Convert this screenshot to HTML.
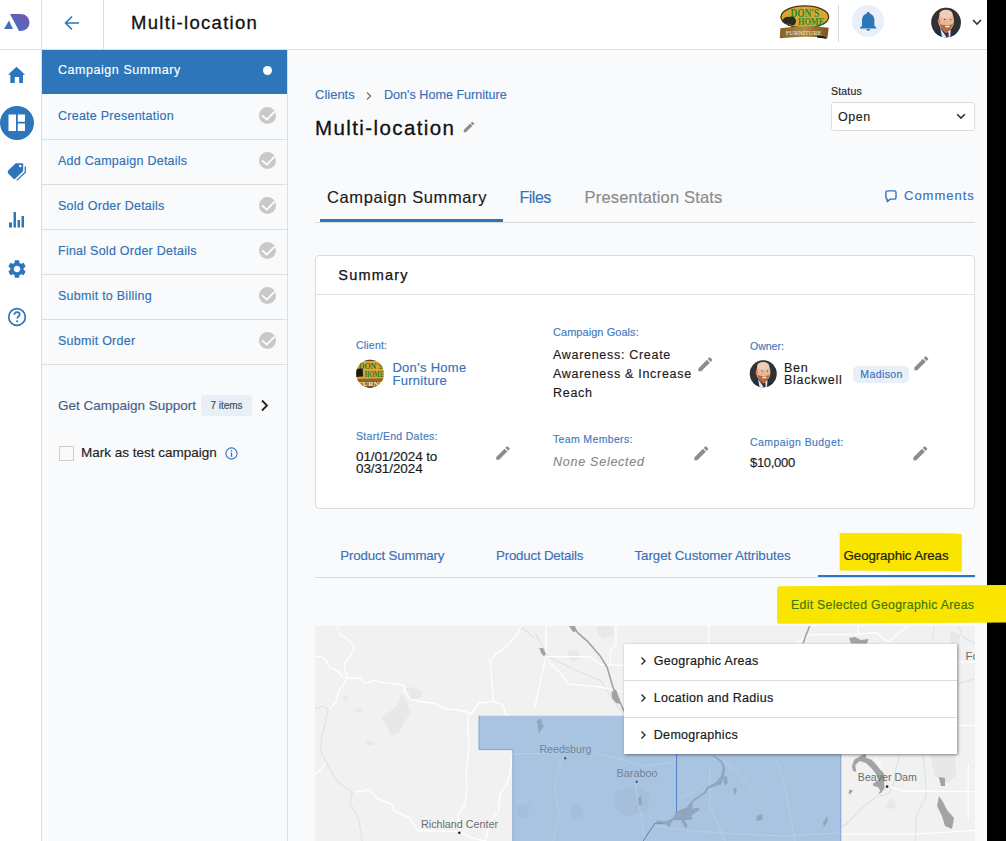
<!DOCTYPE html>
<html><head><meta charset="utf-8">
<style>
*{box-sizing:border-box;margin:0;padding:0}
html,body{width:1006px;height:841px;overflow:hidden;background:#000}
body{font-family:"Liberation Sans",sans-serif;position:relative;color:#1a1a1a;-webkit-text-stroke:0.15px currentColor}
.a{position:absolute;white-space:nowrap}
svg{-webkit-text-stroke:0}
#page{position:absolute;left:0;top:0;width:987px;height:841px;background:#f9fafc;overflow:hidden}
#hdr{position:absolute;left:0;top:0;width:987px;height:50px;background:#fff;border-bottom:1px solid #dedede}
#rail{position:absolute;left:0;top:50px;width:42px;height:791px;background:#fff;border-right:1px solid #dedede}
#side{position:absolute;left:42px;top:50px;width:246px;height:791px;background:#f9fafc;border-right:1px solid #dedede}
.row{position:absolute;left:0;width:245px;height:45px;border-bottom:1px solid #dedede}
.row .t{position:absolute;left:16px;top:13.3px;font-size:12.5px;color:#2f70b6;letter-spacing:0.25px;line-height:16px}
.row .ck{position:absolute;left:217px;top:12.4px;width:17px;height:17px;border-radius:50%;background:#c9c9c9}
.row .ck svg{position:absolute;left:0;top:0}
</style></head><body>
<div id="page">
<div id="hdr">
  <svg class="a" style="left:0;top:0" width="42" height="50" viewBox="0 0 42 50">
    <defs><linearGradient id="lg" x1="0" y1="1" x2="1" y2="0"><stop offset="0" stop-color="#3b74c4"/><stop offset="1" stop-color="#7b55b0"/></linearGradient></defs>
    <path d="M4 29 L9 20.5 L13 29 Z" fill="#3f73c2"/>
    <path d="M10 14 L21 14 A8.5 8.5 0 0 1 21 31 L19 31 Z" fill="url(#lg)"/>
  </svg>
  <div class="a" style="left:41px;top:0;width:1px;height:50px;background:#dedede"></div>
  <svg class="a" style="left:64px;top:15px" width="16" height="16" viewBox="0 0 16 16"><path d="M15 8 H2 M8 1.5 L1.5 8 L8 14.5" fill="none" stroke="#2d76ba" stroke-width="1.6"/></svg>
  <div class="a" style="left:103px;top:0;width:1px;height:50px;background:#dedede"></div>
  <div class="a" style="left:131px;top:13.64px;font-size:18.5px;line-height:18.5px;color:#111;letter-spacing:1.3px;-webkit-text-stroke:0.3px #111">Multi-location</div>

  <svg class="a" style="left:775px;top:2px" width="60" height="40" viewBox="0 0 1006 671">
    <defs><linearGradient id="rib" x1="0" y1="0" x2="1" y2="0"><stop offset="0" stop-color="#8a5e22"/><stop offset="0.5" stop-color="#b08a48"/><stop offset="1" stop-color="#7a5220"/></linearGradient></defs>
    <ellipse cx="500" cy="250" rx="400" ry="185" fill="#d9a633" stroke="#4a3510" stroke-width="22"/>
    <path d="M130 300 Q170 230 240 250 Q300 220 340 280 Q370 320 330 380 Q280 400 240 370 L230 400 L215 400 L220 360 Q160 380 130 330 Z" fill="#2b2a1c"/>
    <text x="500" y="245" font-family="Liberation Serif" font-size="210" font-weight="bold" fill="#1e8a2e" text-anchor="middle" textLength="480" lengthAdjust="spacingAndGlyphs">DON'S</text>
    <text x="605" y="390" font-family="Liberation Serif" font-size="165" font-weight="bold" fill="#1e8a2e" text-anchor="middle" textLength="440" lengthAdjust="spacingAndGlyphs">HOME</text>
    <path d="M90 440 Q500 380 900 430 L880 600 Q500 560 80 610 Z" fill="url(#rib)"/>
    <path d="M700 570 Q800 560 870 600 L860 620 Q780 600 710 600 Z" fill="#1e1a12"/>
    <text x="480" y="550" font-family="Liberation Serif" font-size="120" fill="#f2ead8" text-anchor="middle" textLength="600" lengthAdjust="spacingAndGlyphs">FURNITURE</text>
  </svg>
  <div class="a" style="left:838px;top:5px;width:1px;height:37px;background:#d8d8d8"></div>
  <div class="a" style="left:852px;top:5px;width:32px;height:32px;border-radius:50%;background:#e9f0f8"></div>
  <svg class="a" style="left:858px;top:10px" width="20" height="22" viewBox="0 0 20 22"><path d="M10.2 2.0 C11.1 2.0 11.6 2.6 11.7 3.4 C14.5 4.2 16.4 6.6 16.4 10 V16 L18.3 17.6 V18.4 H2.1 V17.6 L4 16 V10 C4 6.6 5.9 4.2 8.7 3.4 C8.8 2.6 9.3 2.0 10.2 2.0 Z M8.4 19 H12 C12 20 11.2 20.8 10.2 20.8 C9.2 20.8 8.4 20 8.4 19 Z" fill="#2d76ba"/></svg>
  <svg class="a" style="left:926.00px;top:3.00px" width="40.00" height="40.00" viewBox="0 0 841 841">
<defs><clipPath id="cph"><circle cx="422" cy="410" r="312"/></clipPath></defs>
<circle cx="422" cy="410" r="314" fill="#c9d6ea"/>
<g clip-path="url(#cph)">
<rect x="0" y="0" width="841" height="841" fill="#323232"/>
<path d="M150 640 Q250 520 330 500 L520 520 Q620 560 680 680 L700 841 L140 841 Z" fill="#1f2f47"/>
<path d="M300 530 L420 700 L470 841 L360 841 Z" fill="#dcecef"/>
<path d="M440 600 L520 560 L500 841 L450 841 Z" fill="#dcecef"/>
<path d="M430 620 L470 610 L480 760 L440 760 Z" fill="#5a2020"/>
<ellipse cx="425" cy="370" rx="165" ry="225" fill="#e7b89c"/>
<ellipse cx="270" cy="380" rx="25" ry="50" fill="#d9746a"/>
<ellipse cx="420" cy="230" rx="140" ry="90" fill="#f0cdb8"/>
<path d="M290 430 Q300 560 420 640 Q540 560 570 430 Q520 470 420 460 Q330 470 290 430 Z" fill="#b8693f"/>
<ellipse cx="450" cy="495" rx="55" ry="22" fill="#efe3cf"/>
<circle cx="395" cy="345" r="14" fill="#4a3a34"/><circle cx="520" cy="350" r="14" fill="#5a4a44"/>
</g></svg>
  <svg class="a" style="left:972px;top:19px" width="10" height="7" viewBox="0 0 10 7"><path d="M1 1 L5 5 L9 1" fill="none" stroke="#333" stroke-width="1.6"/></svg>
</div>
<div id="rail">
  <svg class="a" style="left:8px;top:16px" width="18" height="18" viewBox="0 0 18 18"><path d="M8.5 0.8 L17.1 8.65 H15 V17 H11.15 V11 H6.8 V17 H2.3 V8.65 H0 Z" fill="#2d76ba"/></svg>
  <div class="a" style="left:0px;top:56px;width:34px;height:34px;border-radius:50%;background:#2d76ba"></div>
  <svg class="a" style="left:8px;top:64px" width="18" height="18" viewBox="0 0 18 18"><path d="M0.5 0.5 H8 V17 H0.5 Z M9.8 0.5 H17 V7.8 H9.8 Z M9.8 9.6 H17 V17 H9.8 Z" fill="#fff"/></svg>
  <svg class="a" style="left:6px;top:112px" width="22" height="20" viewBox="0 0 22 20"><path d="M2.2 8.6 L9.4 1.4 Q9.6 1.2 10 1.2 H16.2 Q17.2 1.2 17.2 2.2 V8.6 Q17.2 9.2 16.8 9.6 L9.2 16.8 Q8.2 17.6 7.4 16.8 L2.2 11.4 Q1.2 10 2.2 8.6 Z" fill="#2d76ba"/><circle cx="14.3" cy="4" r="1.3" fill="#fff"/><path d="M19.3 4.6 V10.2 L10.7 18.4" fill="none" stroke="#2d76ba" stroke-width="1.3" stroke-linejoin="round"/></svg>
  <svg class="a" style="left:8px;top:160px" width="18" height="18" viewBox="0 0 18 18"><path d="M1 12.5 H4 V17.5 H1 Z M5.5 2 H8 V17.5 H5.5 Z M9.5 10 H12 V17.5 H9.5 Z M13.5 6 H16 V17.5 H13.5 Z" fill="#2d76ba"/></svg>
  <svg class="a" style="left:5.5px;top:207.5px" width="22" height="22" viewBox="0 0 24 24"><path fill="#2d76ba" d="M19.14 12.94c.04-.3.06-.61.06-.94 0-.32-.02-.64-.07-.94l2.03-1.58a.49.49 0 0 0 .12-.61l-1.92-3.32a.488.488 0 0 0-.59-.22l-2.39.96c-.5-.38-1.030-.7-1.62-.94l-.36-2.540a.484.484 0 0 0-.48-.41h-3.84c-.24 0-.43.17-.47.41l-.36 2.54c-.59.24-1.13.57-1.62.94l-2.39-.96c-.22-.08-.47 0-.59.22L2.74 8.87c-.12.21-.08.47.12.61l2.03 1.58c-.05.3-.09.63-.09.94s.02.64.07.94l-2.03 1.58a.49.49 0 0 0-.12.61l1.92 3.32c.12.22.37.29.59.22l2.39-.96c.5.38 1.03.7 1.62.94l.36 2.54c.05.24.24.41.48.41h3.84c.24 0 .44-.17.47-.41l.36-2.54c.59-.24 1.13-.56 1.62-.94l2.39.96c.22.08.47 0 .59-.22l1.92-3.32c.12-.22.07-.47-.12-.61l-2.01-1.58zM12 15.6c-1.98 0-3.6-1.62-3.6-3.6s1.62-3.6 3.6-3.6 3.6 1.62 3.6 3.6-1.62 3.6-3.6 3.6z"/></svg>
  <svg class="a" style="left:7px;top:257px" width="20" height="20" viewBox="0 0 20 20"><circle cx="10" cy="10" r="8.3" fill="none" stroke="#2d76ba" stroke-width="1.7"/><path d="M7.3 7.8 C7.3 6.2 8.5 5.2 10 5.2 C11.6 5.2 12.7 6.2 12.7 7.6 C12.7 9.4 10.2 9.6 10.2 11.6" fill="none" stroke="#2d76ba" stroke-width="1.7"/><circle cx="10.2" cy="14.3" r="1.1" fill="#2d76ba"/></svg>
</div>
<div id="side">
<div class="row" style="top:0;height:44px;background:#2d76ba;border-bottom:none"><div class="t" style="color:#fff;top:12px;letter-spacing:0.55px">Campaign Summary</div><div class="a" style="left:221px;top:16px;width:9px;height:9px;border-radius:50%;background:#fff"></div></div>
<div class="row" style="top:45px"><div class="t">Create Presentation</div><div class="ck"><svg width="17" height="17" viewBox="0 0 17 17"><path d="M3 8.4 L7.8 12.6 L15.6 4.6" fill="none" stroke="#fff" stroke-width="1.8"/></svg></div></div>
<div class="row" style="top:90px"><div class="t">Add Campaign Details</div><div class="ck"><svg width="17" height="17" viewBox="0 0 17 17"><path d="M3 8.4 L7.8 12.6 L15.6 4.6" fill="none" stroke="#fff" stroke-width="1.8"/></svg></div></div>
<div class="row" style="top:135px"><div class="t">Sold Order Details</div><div class="ck"><svg width="17" height="17" viewBox="0 0 17 17"><path d="M3 8.4 L7.8 12.6 L15.6 4.6" fill="none" stroke="#fff" stroke-width="1.8"/></svg></div></div>
<div class="row" style="top:180px"><div class="t">Final Sold Order Details</div><div class="ck"><svg width="17" height="17" viewBox="0 0 17 17"><path d="M3 8.4 L7.8 12.6 L15.6 4.6" fill="none" stroke="#fff" stroke-width="1.8"/></svg></div></div>
<div class="row" style="top:225px"><div class="t">Submit to Billing</div><div class="ck"><svg width="17" height="17" viewBox="0 0 17 17"><path d="M3 8.4 L7.8 12.6 L15.6 4.6" fill="none" stroke="#fff" stroke-width="1.8"/></svg></div></div>
<div class="row" style="top:270px"><div class="t">Submit Order</div><div class="ck"><svg width="17" height="17" viewBox="0 0 17 17"><path d="M3 8.4 L7.8 12.6 L15.6 4.6" fill="none" stroke="#fff" stroke-width="1.8"/></svg></div></div>
  <div class="a" style="left:16px;top:348px;font-size:13.5px;color:#42608a;line-height:16px">Get Campaign Support</div>
  <div class="a" style="left:159px;top:345px;width:51px;height:21px;border-radius:3px;background:#e9eff7;font-size:10px;color:#3d4a5c;text-align:center;line-height:21px">7 items</div>
  <svg class="a" style="left:218px;top:349px" width="10" height="13" viewBox="0 0 10 13"><path d="M2 1.5 L7 6.5 L2 11.5" fill="none" stroke="#222" stroke-width="1.8"/></svg>
  <div class="a" style="left:17px;top:396px;width:15px;height:15px;border:1px solid #cfcfcf;background:#fafafa"></div>
  <div class="a" style="left:39px;top:395.3px;font-size:13.5px;color:#222;line-height:16px">Mark as test campaign</div>
  <svg class="a" style="left:183px;top:397px" width="13" height="13" viewBox="0 0 13 13"><circle cx="6.5" cy="6.5" r="5.6" fill="none" stroke="#2d76ba" stroke-width="1.1"/><path d="M6.5 5.5 V9.8" stroke="#2d76ba" stroke-width="1.3"/><circle cx="6.5" cy="3.7" r="0.8" fill="#2d76ba"/></svg>
</div>
<div class="a" style="left:315px;top:88.20px;font-size:13px;line-height:13px;color:#3a70b8;letter-spacing:0px;">Clients</div>
<svg class="a" style="left:365px;top:91px" width="8" height="10" viewBox="0 0 8 10"><path d="M2 1.5 L5.5 5 L2 8.5" fill="none" stroke="#777" stroke-width="1.4"/></svg>
<div class="a" style="left:384px;top:88.53px;font-size:12.6px;line-height:12.6px;color:#3a70b8;letter-spacing:0px;">Don's Home Furniture</div>
<div class="a" style="left:315px;top:117.85px;font-size:20.5px;line-height:20.5px;color:#111;letter-spacing:1.4px;-webkit-text-stroke:0.3px #111">Multi-location</div>
<svg class="a" style="left:461.95px;top:120.05px" width="14.00" height="14.00" viewBox="0 0 24 24"><path fill="#8c8c8c" d="M3 17.25V21h3.75L17.81 9.94l-3.75-3.75L3 17.25zM20.71 7.04a.996.996 0 0 0 0-1.41l-2.34-2.34a.996.996 0 0 0-1.41 0l-1.83 1.83 3.75 3.75 1.83-1.83z"/></svg>
<div class="a" style="left:831px;top:86.31px;font-size:10.5px;line-height:10.5px;color:#222;letter-spacing:0.2px;">Status</div>
<div class="a" style="left:831px;top:102px;width:144px;height:29px;background:#fff;border:1px solid #dcdcdc;border-radius:3px"></div>
<div class="a" style="left:838px;top:111.42px;font-size:12.5px;line-height:12.5px;color:#222;letter-spacing:0.5px;">Open</div>
<svg class="a" style="left:956px;top:113px" width="10" height="7" viewBox="0 0 10 7"><path d="M1.2 1.2 L5 5 L8.8 1.2" fill="none" stroke="#333" stroke-width="1.6"/></svg>
<div class="a" style="left:327px;top:189.13px;font-size:16.5px;line-height:16.5px;color:#1a1a1a;letter-spacing:0.6px;">Campaign Summary</div>
<div class="a" style="left:519.5px;top:189.56px;font-size:16px;line-height:16px;color:#3a70b8;letter-spacing:-0.5px;">Files</div>
<div class="a" style="left:584.6px;top:189.13px;font-size:16.5px;line-height:16.5px;color:#8a8a8a;letter-spacing:0.17px;">Presentation Stats</div>
<div class="a" style="left:315px;top:222px;width:660px;height:1px;background:#d9d9d9"></div>
<div class="a" style="left:320px;top:219px;width:183px;height:3px;background:#2d76ba"></div>
<svg class="a" style="left:883px;top:189px" width="16" height="15" viewBox="0 0 16 15"><path d="M4.5 1.9 H11.5 Q13 1.9 13 3.4 V8.6 Q13 10.1 11.5 10.1 H7.3 L4.2 12.6 L4.3 10.1 Q2.9 10.1 2.9 8.6 V3.4 Q2.9 1.9 4.5 1.9 Z" fill="none" stroke="#2d76ba" stroke-width="1.4" stroke-linejoin="round"/></svg>
<div class="a" style="left:904px;top:189.00px;font-size:13px;line-height:13px;color:#3a70b8;letter-spacing:1.0px;">Comments</div>
<div class="a" style="left:315px;top:255px;width:660px;height:254px;background:#fff;border:1px solid #dcdcdc;border-radius:4px"></div>
<div class="a" style="left:316px;top:294px;width:658px;height:1px;background:#e2e2e2"></div>
<div class="a" style="left:338.3px;top:267.63px;font-size:14.5px;line-height:14.5px;color:#111;letter-spacing:1.2px;-webkit-text-stroke:0.25px #111">Summary</div>
<div class="a" style="left:356px;top:340.21px;font-size:10.5px;line-height:10.5px;color:#4279c0;letter-spacing:0.2px;">Client:</div>
<svg class="a" style="left:352px;top:356px" width="36" height="36" viewBox="0 0 841 841">
<defs><clipPath id="cpc"><circle cx="422" cy="414" r="326"/></clipPath></defs>
<g clip-path="url(#cpc)">
<rect width="841" height="841" fill="#dca436"/>
<rect x="0" y="70" width="841" height="40" fill="#2a2418"/>
<text x="440" y="300" font-family="Liberation Serif" font-size="190" font-weight="bold" fill="#1a7a2a" text-anchor="middle" textLength="560" lengthAdjust="spacingAndGlyphs">DON'S</text>
<text x="520" y="490" font-family="Liberation Serif" font-size="190" font-weight="bold" fill="#1a7a2a" text-anchor="middle" textLength="440" lengthAdjust="spacingAndGlyphs">HOME</text>
<path d="M90 300 L250 300 L260 480 L90 490 Z" fill="#1d1a14"/>
<path d="M0 540 L841 520 L841 841 L0 841 Z" fill="#8e6628"/>
<text x="420" y="690" font-family="Liberation Serif" font-size="150" font-weight="bold" fill="#f4ecdc" text-anchor="middle" textLength="540" lengthAdjust="spacingAndGlyphs">FURNI</text>
<rect x="0" y="720" width="841" height="121" fill="#2a2418"/>
</g></svg>
<div class="a" style="left:392.4px;top:361.00px;font-size:13px;line-height:13px;color:#3a70b8;letter-spacing:0.3px;">Don's Home</div>
<div class="a" style="left:392.4px;top:373.60px;font-size:13px;line-height:13px;color:#3a70b8;letter-spacing:0.3px;">Furniture</div>
<div class="a" style="left:356px;top:431.11px;font-size:10.5px;line-height:10.5px;color:#4279c0;letter-spacing:0.3px;">Start/End Dates:</div>
<div class="a" style="left:356px;top:449.57px;font-size:13.5px;line-height:13.5px;color:#1a1a1a;letter-spacing:-0.1px;">01/01/2024 to</div>
<div class="a" style="left:356px;top:461.67px;font-size:13.5px;line-height:13.5px;color:#1a1a1a;letter-spacing:-0.1px;">03/31/2024</div>
<svg class="a" style="left:494.45px;top:444.05px" width="18.00" height="18.00" viewBox="0 0 24 24"><path fill="#8c8c8c" d="M3 17.25V21h3.75L17.81 9.94l-3.75-3.75L3 17.25zM20.71 7.04a.996.996 0 0 0 0-1.41l-2.34-2.34a.996.996 0 0 0-1.41 0l-1.83 1.83 3.75 3.75 1.83-1.83z"/></svg>
<div class="a" style="left:553px;top:326.89px;font-size:11px;line-height:11px;color:#4279c0;letter-spacing:0.05px;">Campaign Goals:</div>
<div class="a" style="left:553px;top:349.12px;font-size:12.5px;line-height:12.5px;color:#1a1a1a;letter-spacing:0.7px;">Awareness: Create</div>
<div class="a" style="left:553px;top:367.72px;font-size:12.5px;line-height:12.5px;color:#1a1a1a;letter-spacing:0.7px;">Awareness &amp; Increase</div>
<div class="a" style="left:553px;top:386.82px;font-size:12.5px;line-height:12.5px;color:#1a1a1a;letter-spacing:0.7px;">Reach</div>
<svg class="a" style="left:695.67px;top:354.67px" width="18.67" height="18.67" viewBox="0 0 24 24"><path fill="#8c8c8c" d="M3 17.25V21h3.75L17.81 9.94l-3.75-3.75L3 17.25zM20.71 7.04a.996.996 0 0 0 0-1.41l-2.34-2.34a.996.996 0 0 0-1.41 0l-1.83 1.83 3.75 3.75 1.83-1.83z"/></svg>
<div class="a" style="left:553px;top:434.41px;font-size:10.5px;line-height:10.5px;color:#4279c0;letter-spacing:0.35px;">Team Members:</div>
<div class="a" style="left:553px;top:455.92px;font-size:12.5px;line-height:12.5px;color:#888;letter-spacing:0.75px;font-style:italic">None Selected</div>
<svg class="a" style="left:691.67px;top:443.67px" width="18.67" height="18.67" viewBox="0 0 24 24"><path fill="#8c8c8c" d="M3 17.25V21h3.75L17.81 9.94l-3.75-3.75L3 17.25zM20.71 7.04a.996.996 0 0 0 0-1.41l-2.34-2.34a.996.996 0 0 0-1.41 0l-1.83 1.83 3.75 3.75 1.83-1.83z"/></svg>
<div class="a" style="left:750px;top:341.41px;font-size:10.5px;line-height:10.5px;color:#4279c0;letter-spacing:0px;">Owner:</div>
<svg class="a" style="left:745.25px;top:356.30px" width="36.36" height="36.36" viewBox="0 0 841 841">
<defs><clipPath id="cpo"><circle cx="422" cy="410" r="312"/></clipPath></defs>
<circle cx="422" cy="410" r="314" fill="#c9d6ea"/>
<g clip-path="url(#cpo)">
<rect x="0" y="0" width="841" height="841" fill="#323232"/>
<path d="M150 640 Q250 520 330 500 L520 520 Q620 560 680 680 L700 841 L140 841 Z" fill="#1f2f47"/>
<path d="M300 530 L420 700 L470 841 L360 841 Z" fill="#dcecef"/>
<path d="M440 600 L520 560 L500 841 L450 841 Z" fill="#dcecef"/>
<path d="M430 620 L470 610 L480 760 L440 760 Z" fill="#5a2020"/>
<ellipse cx="425" cy="370" rx="165" ry="225" fill="#e7b89c"/>
<ellipse cx="270" cy="380" rx="25" ry="50" fill="#d9746a"/>
<ellipse cx="420" cy="230" rx="140" ry="90" fill="#f0cdb8"/>
<path d="M290 430 Q300 560 420 640 Q540 560 570 430 Q520 470 420 460 Q330 470 290 430 Z" fill="#b8693f"/>
<ellipse cx="450" cy="495" rx="55" ry="22" fill="#efe3cf"/>
<circle cx="395" cy="345" r="14" fill="#4a3a34"/><circle cx="520" cy="350" r="14" fill="#5a4a44"/>
</g></svg><div class="a" style="left:784px;top:361.52px;font-size:12.5px;line-height:12.5px;color:#1a1a1a;letter-spacing:0.7px;">Ben</div>
<div class="a" style="left:784px;top:374.12px;font-size:12.5px;line-height:12.5px;color:#1a1a1a;letter-spacing:0.7px;">Blackwell</div>
<div class="a" style="left:853px;top:366px;width:56px;height:17px;background:#e8eff8;border-radius:5px"></div>
<div class="a" style="left:860.3px;top:369.31px;font-size:10.5px;line-height:10.5px;color:#3a70b8;letter-spacing:0.4px;">Madison</div>
<svg class="a" style="left:911.67px;top:354.47px" width="18.67" height="18.67" viewBox="0 0 24 24"><path fill="#8c8c8c" d="M3 17.25V21h3.75L17.81 9.94l-3.75-3.75L3 17.25zM20.71 7.04a.996.996 0 0 0 0-1.41l-2.34-2.34a.996.996 0 0 0-1.41 0l-1.83 1.83 3.75 3.75 1.83-1.83z"/></svg>
<div class="a" style="left:750px;top:437.41px;font-size:10.5px;line-height:10.5px;color:#4279c0;letter-spacing:0.43px;">Campaign Budget:</div>
<div class="a" style="left:750px;top:455.80px;font-size:13px;line-height:13px;color:#1a1a1a;letter-spacing:-0.3px;">$10,000</div>
<svg class="a" style="left:910.67px;top:443.67px" width="18.67" height="18.67" viewBox="0 0 24 24"><path fill="#8c8c8c" d="M3 17.25V21h3.75L17.81 9.94l-3.75-3.75L3 17.25zM20.71 7.04a.996.996 0 0 0 0-1.41l-2.34-2.34a.996.996 0 0 0-1.41 0l-1.83 1.83 3.75 3.75 1.83-1.83z"/></svg>
<svg class="a" style="left:835px;top:530px" width="130" height="45" viewBox="835 530 130 45"><path d="M839.6 533 Q845 532.8 900 533 L950 533.2 Q958 533.6 961.8 534 L961.8 571.8 Q955 571.6 945 571.3 L839.6 570.6 Z" fill="#f9e500"/></svg>
<div class="a" style="left:340.2px;top:549.24px;font-size:13.3px;line-height:13.3px;color:#3a70b8;letter-spacing:-0.15px;">Product Summary</div>
<div class="a" style="left:496px;top:549.24px;font-size:13.3px;line-height:13.3px;color:#3a70b8;letter-spacing:-0.2px;">Product Details</div>
<div class="a" style="left:634.5px;top:549.24px;font-size:13.3px;line-height:13.3px;color:#3a70b8;letter-spacing:-0.05px;">Target Customer Attributes</div>
<div class="a" style="left:843.6px;top:548.94px;font-size:13.3px;line-height:13.3px;color:#1c2208;letter-spacing:-0.1px;-webkit-text-stroke:0.2px #1c2208">Geographic Areas</div>
<div class="a" style="left:315px;top:577px;width:660px;height:1px;background:#d9d9d9"></div>
<div class="a" style="left:818px;top:575px;width:157px;height:2px;background:#2d76ba"></div>
<div class="a" style="left:315px;top:626px;width:660px;height:215px;background:#f0f0f0;overflow:hidden"><svg width="660" height="215" viewBox="0 0 660 215" style="position:absolute;left:0;top:0">
<rect width="660" height="215" fill="#f1f1f1"/>
<g fill="#e8e8e9">
<path d="M90.7 62 L100 61.2 L107 66 L106 72 L96 73 Z"/>
<path d="M86 68 L91 72 L93 80 L96 86 L92 92 L88 98 L84 106 L76 110 L72 100 L66 92 L74 86 L82 80 Z"/>
<path d="M28.4 70 L33.9 69 L32 75.4 L29 75 Z"/>
<path d="M40 83 L48 82 L47 87 L41 86 Z"/>
<path d="M50 115 L60 116 L58 120 L51 119 Z"/>
<path d="M281 0 H298.7 L297 10 L288 13 L283 9 Z"/>
<path d="M252.8 25 L262 24 L266 31 L258 36 L254 32 Z"/>
<path d="M615 127 L640 128 L641 150 L632 157 L620 150 Z"/>
<path d="M576.2 172.1 L580.6 178.7 L579.5 183.0 L571.9 182.0 L570.8 178.7 Z"/>
<path d="M635 5 L645 8 L644 20 L636 18 Z"/>
</g>
<g fill="none" stroke="#d6e6ea" stroke-width="1.2">
<path d="M0 83 L8 79.8 L13.1 83 L10 98 L7 110 L5.5 124.7 L13.1 140 L21.9 155.3 L37.2 166.2 L35 177.2 L43.7 192.5 L47 215"/>
<path d="M220 6.6 L233.1 30.6 L259.4 43.7 L285.6 54.7 L303.1 80.9 L307.5 87.5 L318 100"/>
<path d="M585.0 128.4 L580.6 143.7 L578.4 159.0 L574.0 167.7 L560.9 171.0 L547.8 180.9 L531.4 198.4 L525.9 200.5"/>
<path d="M607.9 128.4 L610.1 145.9 L611.2 169.9 L605.8 180.9 L601.4 189.6 L600.3 215.0"/>
<path d="M619.3 0 L617.1 13.1"/>
<path d="M643.4 0 L647.7 10.9 L660 17.5"/>
<path d="M642.3 58 L660 52.5"/>
<path d="M205.6 1 L220 12"/>
</g>
<g fill="none" stroke="#ffffff" stroke-width="1.3" stroke-linejoin="round">
<path d="M21.9 0 L24 7.7 L32.8 13.1 L39.4 20.8 L36 29.5 L29.5 37.2 L30.6 47 L32.8 51.4"/>
<path d="M0 30.6 L4.4 30 L11 33.9 L14.2 41.5 L19.7 43.7 L24 45.9 L27.3 51.4 L32.8 51.4"/>
<path d="M32.8 52 L45.9 52.5 L49.2 57.3 L59 54.7 L70 56.9 L83.1 58 L89.7 60.1 L89.7 65.6 L96.2 73.9 L111.5 76.5 L120.3 77.6 L129 82.7 L144.3 84.2 L156.4 87.5"/>
<path d="M31.7 52 L28.4 59 L23 65.6 L21.9 75.4 L14.2 83.1"/>
<path d="M156.4 87.5 L153 89.7 L153 105 L154.2 122.5 L150.9 148.7 L152 159.7 L149.8 179.4 L143.2 188.1 L144.3 205.6 L157.4 212.2 L170.6 215"/>
<path d="M156.4 87.5 L164 77 L178.2 75.4 L177.1 56.9 L175 35 L181.5 27.3 L190.2 21.9 L203.4 6.6 L205.6 0"/>
<path d="M178.2 75.4 L188 78.7 L190.2 87.5 L196.8 91.8"/>
<path d="M0 148.7 L10.9 136.7"/>
<path d="M39.4 166.2 L54.7 164 L61.2 171.7 L76.5 178.3 L78.7 184.8 L94 191.4 L102.8 204.5 L144.3 205.6"/>
<path d="M197.9 125.8 L194.6 148.7 L192.4 157.5 L184.8 168.4 L183.7 185.9 L175 194.7 L170.6 215"/>
<path d="M230.9 0 L230.9 30.6 L225.5 54.7 L220 80.9"/>
<path d="M232 30.6 L274.7 30.6 L285.6 38.3 L308.6 39.4"/>
<path d="M233.1 35 L246.2 48.1 L252.8 57.9 L285.6 61.2 L308.6 65.6"/>
<path d="M300.9 0 L300.9 19.7 L295.4 24 L295.4 39.4"/>
<path d="M393.8 0 L393.8 17.5"/>
<path d="M481.5 17.5 L494.7 8.7 L542.8 8.7 L560.3 6.6 L573.4 15.3 L593.1 0"/>
<path d="M542.8 0 L542.8 8.7"/>
<path d="M576.2 161.2 L587.2 165.0 L660 165.6"/>
<path d="M525.9 208.2 L600.3 208.2 L660 204.4"/>
<path d="M653.2 137.8 L653.2 192.5"/>
<path d="M642 36 L660 36"/>
<path d="M642 99.5 L660 99.5"/>
<path d="M560 130 L566 140"/>
</g>
<g fill="none" stroke="#a3a3a3" stroke-width="1.6" stroke-linejoin="round">
<path d="M257.2 0 L262.6 6.6 L272.5 15.3 L285.6 30.6 L292.2 41.5 L295.4 52.5 L298.7 63.4 L304.2 74.3 L307.5 82 L312 90"/>
<path d="M494.7 0 L490.3 10.9 L488.1 17.5"/>
</g>
<g fill="#a3a3a3">
<path d="M254 0 L260 0 L262 5 L258 6 Z"/>
<path d="M296.5 66 L301 63.4 L304.2 72 L306 78 L301 77 L297 72 Z"/>
<path d="M224.4 22 L228 21.9 L231 28 L229 30.6 L226 27 Z"/>
<path d="M534 12 L540 11 L546 14 L553.7 13 L552 17.5 L536 17.5 Z"/>
</g>
<!-- blue polygon -->
<path d="M164 89.7 H525.8 V215 H197.9 V123.6 H164 Z" fill="#a9c4e1"/>
<path d="M164 89.7 V123.6 H197.9 V215" fill="none" stroke="#7aa3d4" stroke-width="1"/>
<g fill="#a4bedb">
<path d="M255 180 L266 178 L268 190 L258 194 Z"/>
<path d="M300 165 L320 160 L335 168 L332 185 L310 190 L298 180 Z"/>
<path d="M200 180 L215 178 L212 192 L202 190 Z"/>
</g>
<g fill="none" stroke="#b8cee6" stroke-width="1">
<path d="M198 128 L235 127 L270 125 L300 132 L330 140 L361 136"/>
<path d="M246 135 L240 160 L244 190 L238 215"/>
<path d="M320 158 L326 190 L330 215"/>
<path d="M361 175 L380 165 L395 150"/>
<path d="M340 200 L380 205 L420 208 L470 210 L525 207"/>
<path d="M400 128 L420 145 L440 165"/>
<path d="M395 140 L395 180 L410 215"/>
<path d="M460 128 L470 160 L480 215"/>
</g>
<path d="M361.6 128.3 L361.6 188.9 L357.5 193.3 L347.7 197.6 L339.6 197.6 L328.2 215.0" fill="none" stroke="#4f82c4" stroke-width="1"/>
<g fill="#8fa6be">
<path d="M347.7 197.6 L353.1 199.8 L354.2 201.9 L357.5 194.3 L366.1 194.3 L370.5 203.0 L372.6 199.8 L369.4 194.3 L378.0 193.3 L375.9 190.0 L385.1 183.5 L383.4 181.4 L376.9 183.0 L378.0 175.9 L385.6 170.5 L391.0 167.3 L393.2 163.0 L400.8 159.7 L406.2 158.6 L408.3 152.1 L410.5 142.4 L407.3 134.8 L400.8 130.5 L396.4 130.0 L400.8 132.1 L406.2 137.0 L407.8 142.4 L406.2 150.0 L400.8 156.5 L392.1 160.8 L388.9 166.2 L379.1 172.7 L375.9 175.9 L371.5 181.4 L364.0 184.6 L359.6 188.9 L357.5 193.3 L349.9 195.4 L342.3 194.3 L340.2 197.6 Z"/>
<path d="M408.3 151.1 L411.6 150.0 L412.7 156.5 L410.5 159.7 L408.9 156.5 Z"/>
<path d="M222 95 L226 92 L227 98 L229 100 L226 104 L224 108 L223 102 Z"/>
<path d="M323 172 L326 170 L327 178 L324 180 Z"/>
<path d="M442 190 L448 188 L447 194 L441 195 Z"/>
<path d="M508 197 L512 190 L513 195 L509 201 Z"/>
<path d="M418 162 L422 162 L420 170 Z"/>
</g>
<path d="M525.8 128 V215" stroke="#7aa3d4" stroke-width="1"/>
<g fill="#a3a3a3">
<path d="M547.8 128.4 L551.1 128.4 L551.1 131.7 L556.6 133.8 L560.9 138.2 L565.3 143.7 L568.6 147.0 L569.7 152.4 L569.1 156.8 L569.7 162.3 L566.4 166.6 L563.1 168.3 L565.3 164.5 L563.1 161.2 L558.7 160.1 L557.6 157.9 L560.9 155.7 L564.2 153.5 L560.9 148.1 L556.6 142.6 L551.1 137.1 L544.5 134.9 L540.2 139.3 L541.2 145.9 L538.0 144.8 L536.9 140.4 L539.1 133.8 L544.5 130.6 Z"/>
<path d="M534.7 163.4 L538.0 164.5 L534.7 168.8 L533.6 166.6 Z"/>
<path d="M623.7 151 L630 152 L630 160 L626 160 Z"/>
<path d="M624 170 L628 176 L632 184 L639 192 L637 203 L630 200 L627 190 L622 180 Z"/>
</g>
<g font-family="Liberation Sans" font-size="11.5" fill="#6c6c6c">
<text x="106" y="202" textLength="77" lengthAdjust="spacingAndGlyphs">Richland Center</text>
<text x="542.8" y="155.3" textLength="59" lengthAdjust="spacingAndGlyphs">Beaver Dam</text>
<text x="650.4" y="34">Fo</text>
</g>
<g font-family="Liberation Sans" font-size="11.5" fill="#6f8499">
<text x="224.4" y="127" textLength="52" lengthAdjust="spacingAndGlyphs">Reedsburg</text>
<text x="301.6" y="150.5" textLength="41" lengthAdjust="spacingAndGlyphs">Baraboo</text>
</g>
<g fill="#222">
<circle cx="144.3" cy="206.7" r="1.3"/>
<circle cx="572.1" cy="160.6" r="1.3"/>
</g>
<g fill="#4d5d70">
<circle cx="250.2" cy="132.3" r="1.2"/>
<circle cx="321.7" cy="155.7" r="1.2"/>
</g>
</svg>
</div>
<div class="a" style="left:624px;top:644px;width:333px;height:110px;background:#fff;box-shadow:1px 1px 3px rgba(0,0,0,0.45)">
<div class="a" style="left:0;top:36px;width:333px;height:1px;background:#dcdcdc"></div>
<div class="a" style="left:0;top:73px;width:333px;height:1px;background:#dcdcdc"></div>
</div>
<svg class="a" style="left:640px;top:655.6px" width="7" height="10" viewBox="0 0 7 10"><path d="M1.5 1.5 L5 5 L1.5 8.5" fill="none" stroke="#222" stroke-width="1.3"/></svg>
<div class="a" style="left:653.8px;top:655.02px;font-size:12.5px;line-height:12.5px;color:#1a1a1a;letter-spacing:0.3px;-webkit-text-stroke:0.2px #1a1a1a">Geographic Areas</div>
<svg class="a" style="left:640px;top:692.6px" width="7" height="10" viewBox="0 0 7 10"><path d="M1.5 1.5 L5 5 L1.5 8.5" fill="none" stroke="#222" stroke-width="1.3"/></svg>
<div class="a" style="left:653.8px;top:692.02px;font-size:12.5px;line-height:12.5px;color:#1a1a1a;letter-spacing:0.3px;-webkit-text-stroke:0.2px #1a1a1a">Location and Radius</div>
<svg class="a" style="left:640px;top:729.6px" width="7" height="10" viewBox="0 0 7 10"><path d="M1.5 1.5 L5 5 L1.5 8.5" fill="none" stroke="#222" stroke-width="1.3"/></svg>
<div class="a" style="left:653.8px;top:729.02px;font-size:12.5px;line-height:12.5px;color:#1a1a1a;letter-spacing:0.3px;-webkit-text-stroke:0.2px #1a1a1a">Demographics</div>
</div>
<svg class="a" style="left:770px;top:580px" width="236" height="50" viewBox="770 580 236 50"><path d="M779 586.3 Q800 586 900 585.6 L1006 585 L1006 622.6 L900 623.3 L779 623.8 Q777 623.5 777 620 L777 589 Q777 586.4 779 586.3 Z" fill="#f9e500"/></svg>
<div class="a" style="left:791px;top:599.39px;font-size:12.3px;line-height:12.3px;color:#3a780e;letter-spacing:0.3px;">Edit Selected Geographic Areas</div>
</body></html>
